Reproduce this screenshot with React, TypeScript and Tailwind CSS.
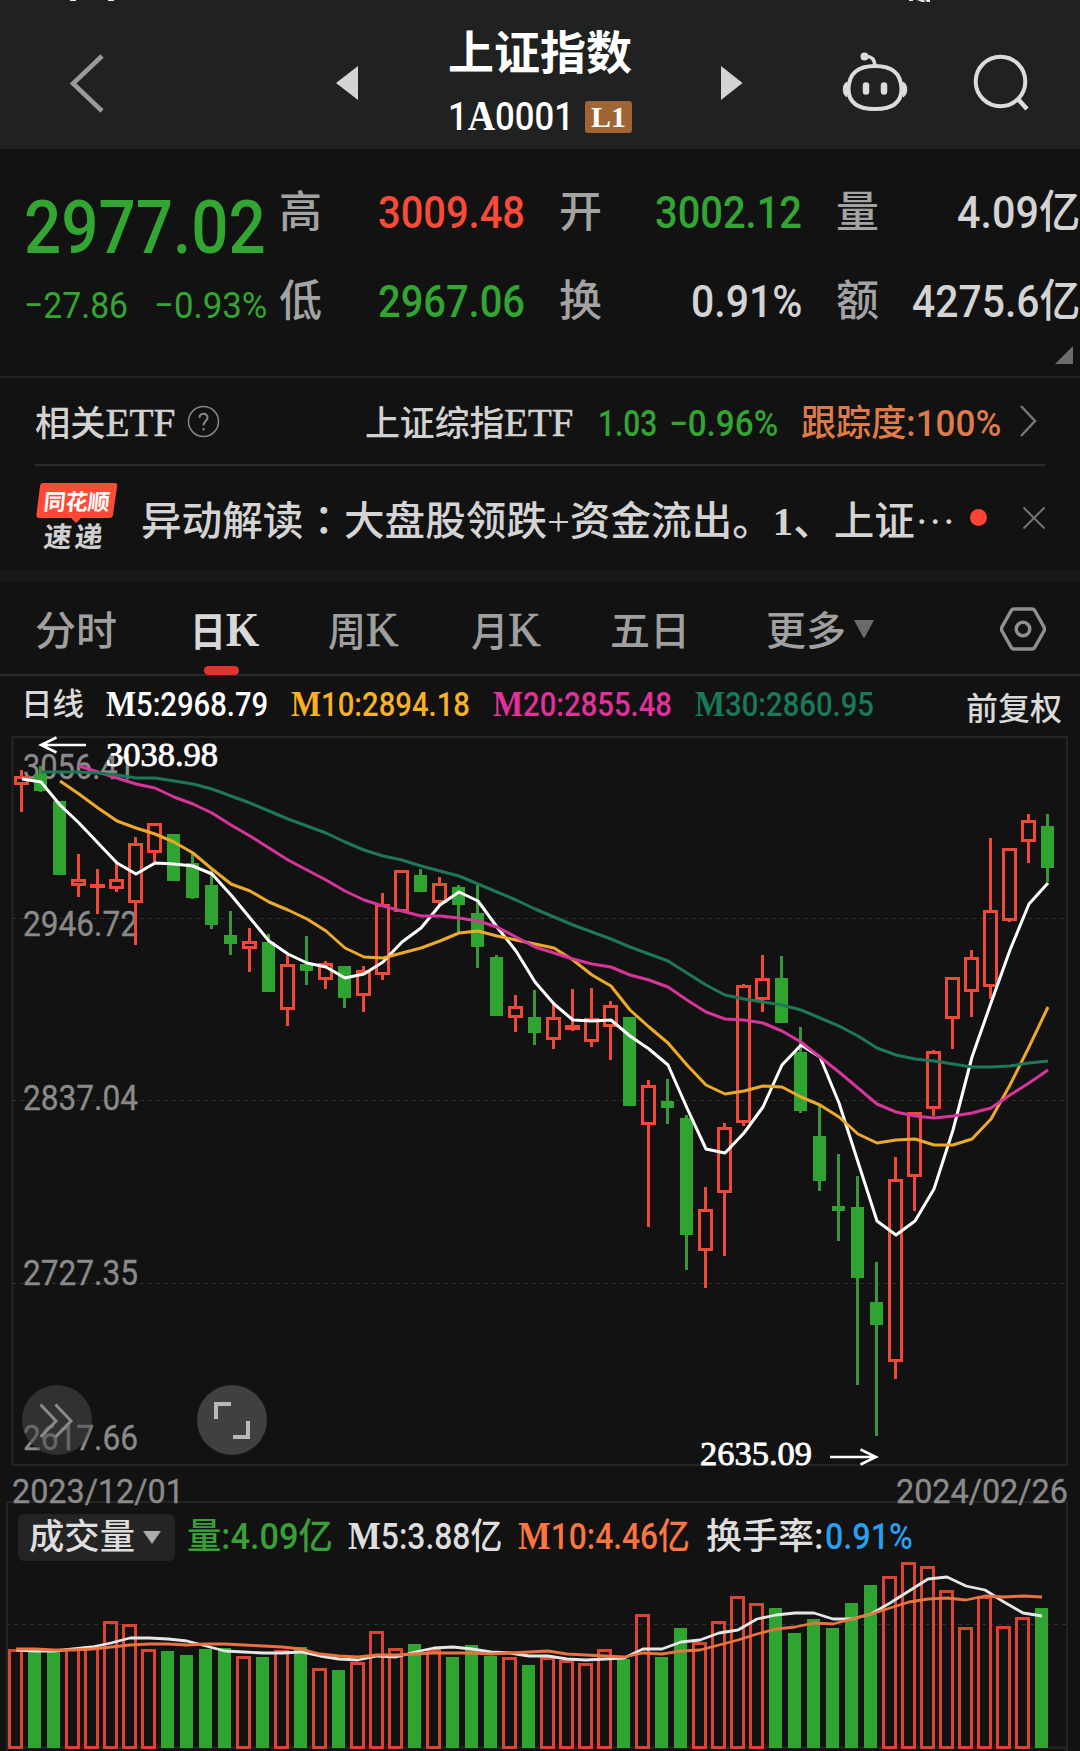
import React, { useLayoutEffect, useRef } from 'react';
import clsx from 'clsx';

const CJK = "font-['Liberation_Serif','Noto_Sans_CJK_SC',serif]";
const NUM = "font-['Roboto','Noto_Sans_CJK_SC',sans-serif]";

// Squeezes or stretches one line of text so that it fills the width of its box
const Fit = ({ className, children }: { className: string; children: React.ReactNode }) => {
  const outer = useRef<HTMLSpanElement>(null);
  const inner = useRef<HTMLSpanElement>(null);

  useLayoutEffect(() => {
    if (!outer.current || !inner.current) return;
    const ratio = outer.current.clientWidth / inner.current.offsetWidth;
    inner.current.style.transform = `scaleX(${ratio})`;
  }, []);

  return (
    <span ref={outer} className={clsx('block shrink-0 whitespace-nowrap leading-none', className)}>
      <span ref={inner} className="inline-block origin-left">
        {children}
      </span>
    </span>
  );
};

const Serif = ({ children }: { children: React.ReactNode }) => (
  <span className="font-['Liberation_Serif',serif] text-[1.09em] font-bold leading-[0]">{children}</span>
);

// [up, high, body top, body bottom, low]
const candles: [number, number, number, number, number][] = [
  [1, 770, 776, 785, 812],
  [0, 766, 774, 791, 792],
  [0, 801, 801, 875, 875],
  [1, 854, 879, 886, 897],
  [1, 869, 884, 888, 914],
  [1, 863, 879, 889, 892],
  [1, 837, 843, 903, 945],
  [1, 823, 823, 853, 862],
  [0, 834, 834, 881, 881],
  [0, 853, 863, 898, 899],
  [0, 870, 885, 925, 929],
  [0, 911, 935, 944, 955],
  [1, 928, 941, 949, 972],
  [0, 934, 942, 992, 992],
  [1, 955, 964, 1010, 1026],
  [0, 936, 964, 971, 985],
  [1, 961, 963, 980, 989],
  [0, 966, 966, 998, 1008],
  [1, 966, 970, 996, 1012],
  [1, 893, 904, 975, 980],
  [1, 870, 870, 912, 912],
  [0, 869, 875, 892, 892],
  [1, 877, 883, 903, 905],
  [0, 885, 887, 905, 932],
  [0, 885, 913, 947, 968],
  [0, 955, 957, 1016, 1016],
  [1, 995, 1006, 1018, 1032],
  [0, 990, 1017, 1033, 1045],
  [1, 1002, 1017, 1040, 1049],
  [1, 989, 1025, 1030, 1031],
  [1, 988, 1018, 1042, 1047],
  [1, 1001, 1005, 1027, 1060],
  [0, 1017, 1017, 1106, 1106],
  [1, 1080, 1085, 1125, 1227],
  [0, 1079, 1101, 1108, 1124],
  [0, 1115, 1118, 1235, 1270],
  [1, 1187, 1209, 1251, 1288],
  [1, 1123, 1127, 1193, 1256],
  [1, 984, 985, 1123, 1126],
  [1, 955, 978, 1000, 1012],
  [0, 956, 978, 1023, 1023],
  [0, 1027, 1052, 1111, 1113],
  [0, 1105, 1136, 1181, 1191],
  [0, 1154, 1206, 1211, 1241],
  [0, 1176, 1207, 1278, 1385],
  [0, 1262, 1302, 1325, 1436],
  [1, 1157, 1179, 1362, 1379],
  [1, 1112, 1112, 1177, 1211],
  [1, 1050, 1051, 1109, 1116],
  [1, 977, 977, 1019, 1049],
  [1, 950, 957, 992, 1017],
  [1, 838, 910, 987, 999],
  [1, 848, 848, 921, 922],
  [1, 814, 820, 842, 863],
  [0, 814, 826, 868, 882],
];

const ma5 = [
  779, 782, 805, 823, 843, 863, 874, 863, 864, 866, 874, 895, 918, 941, 954, 963, 967, 978, 974, 962,
  942, 928, 905, 892, 901, 927, 951, 982, 1004, 1020, 1021, 1020, 1036, 1049, 1065, 1108, 1149, 1153,
  1133, 1107, 1065, 1045, 1057, 1103, 1162, 1221, 1235, 1221, 1189, 1130, 1057, 1003, 950, 904, 883,
];
const ma10 = [
  781, 794, 808, 821, 828, 834, 842, 853, 869, 884, 891, 902, 910, 919, 931, 948, 957, 958, 953, 948,
  941, 933, 931, 936, 940, 944, 948, 960, 975, 986, 1010, 1027, 1043, 1065, 1085, 1094, 1091, 1086,
  1087, 1097, 1105, 1117, 1134, 1143, 1140, 1139, 1145, 1145, 1139, 1119, 1085, 1047, 1007,
];
const ma20 = [
  766, 772, 778, 784, 788, 797, 804, 813, 825, 836, 848, 860, 870, 880, 891, 900, 906, 911, 916, 916,
  918, 921, 927, 937, 947, 953, 959, 964, 967, 975, 980, 987, 1000, 1012, 1019, 1020, 1023, 1031,
  1042, 1057, 1072, 1088, 1104, 1112, 1116, 1118, 1116, 1113, 1108, 1095, 1083, 1070,
];
const ma30 = [
  772, 772, 772, 773, 775, 778, 778, 781, 784, 789, 796, 803, 811, 819, 826, 833, 842, 850, 856, 860,
  866, 871, 876, 884, 892, 900, 909, 917, 925, 932, 939, 947, 954, 961, 973, 985, 995, 999, 1002,
  1005, 1010, 1018, 1026, 1036, 1048, 1055, 1059, 1061, 1064, 1067, 1067, 1066, 1063, 1061,
];

// Tops of the volume bars
const volumes = [
  1649, 1650, 1650, 1648, 1646, 1621, 1624, 1649, 1651, 1655, 1649, 1648, 1656, 1657, 1650, 1647, 1668,
  1670, 1662, 1631, 1648, 1644, 1649, 1657, 1645, 1656, 1657, 1665, 1657, 1660, 1663, 1649, 1659, 1614,
  1657, 1628, 1642, 1621, 1596, 1603, 1608, 1633, 1619, 1628, 1603, 1585, 1576, 1562, 1566, 1590, 1627,
  1596, 1626, 1617, 1608,
];
const volumeUp = new Set([
  0, 3, 4, 5, 6, 7, 12, 14, 16, 18, 19, 20, 22, 26, 28, 29, 30, 31, 33, 36, 37, 38, 39, 46, 47, 48, 49,
  50, 51, 52, 53,
]);
const volMa5 = [
  1650, 1651, 1651, 1649, 1647, 1643, 1638, 1638, 1639, 1641, 1646, 1651, 1652, 1653, 1653, 1652, 1656,
  1659, 1660, 1656, 1657, 1652, 1648, 1647, 1649, 1652, 1653, 1656, 1656, 1659, 1660, 1659, 1658, 1649,
  1649, 1642, 1640, 1633, 1630, 1619, 1615, 1613, 1613, 1619, 1619, 1614, 1603, 1591, 1579, 1577, 1586,
  1590, 1602, 1613, 1616,
];
const volMa10 = [
  1649, 1649, 1650, 1650, 1649, 1647, 1645, 1644, 1644, 1645, 1644, 1644, 1645, 1646, 1647, 1649, 1654,
  1656, 1657, 1655, 1655, 1654, 1653, 1653, 1653, 1654, 1653, 1652, 1651, 1654, 1655, 1656, 1657, 1653,
  1654, 1651, 1650, 1645, 1640, 1634, 1629, 1627, 1623, 1624, 1619, 1614, 1608, 1602, 1599, 1598, 1600,
  1596, 1597, 1596, 1597,
];

const STEP = 19;
const line = (values: number[], x0: number) =>
  values.map((y, i) => `${x0 + i * STEP},${y}`).join(' ');

const Header = () => (
  <header className="relative flex h-[149px] items-center bg-[#1f2221]">
    <svg className="absolute left-0 top-0" width="1080" height="3" fill="#e8e8e8">
      <path d="M70 0h6v1h-6zM108 0h6v1h-6zM909 0h4v1h-4zM917 0l7 0 1 2h-3zM925 0h5v2h-3z" />
    </svg>
    <svg className="ml-[66px] mt-[17px]" width="40" height="62" fill="none" stroke="#9b9b9b" strokeWidth="4.500">
      <path d="M36 4L7 31.5L36 59" />
    </svg>
    <svg className="ml-[229px] mt-[16px]" width="24" height="36" fill="#d4d4d4">
      <path d="M23 1V35L1 18z" />
    </svg>
    <div className="ml-[89px] w-[188px] pt-[18px]">
      <Fit className={clsx('w-[184px] text-[46px] font-bold text-white', CJK)}>上证指数</Fit>
      <div className="mt-[21px] flex items-center">
        <Fit className={clsx('w-[126px] text-[38px] font-medium text-white', NUM)}>
          1<Serif>A</Serif>0001
        </Fit>
        <span className="ml-[11px] flex h-[32px] w-[47px] items-center justify-center rounded-[3px] bg-[#a06534] font-['Liberation_Serif',serif] text-[30px] font-bold leading-none text-white">
          L1
        </span>
      </div>
    </div>
    <svg className="ml-[84px] mt-[16px]" width="24" height="36" fill="#d4d4d4">
      <path d="M1 1V35L22.500 18z" />
    </svg>
    <svg className="ml-[97px] mt-[16px]" width="68" height="64" fill="none" stroke="#dcdcdc" strokeWidth="4">
      <path d="M34 15C50 15 60 21 60.500 38C60.500 52 51 58 34 58S7.500 52 7.500 38C8 21 18 15 34 15z" />
      <path d="M24 5.500C31 5 33.500 8 34 15" strokeWidth="3.500" />
      <circle cx="23.500" cy="5.500" r="4" fill="#dcdcdc" stroke="none" />
      <path d="M6 31C1 33 1 44 6 46zM62 31C67 33 67 44 62 46z" fill="#dcdcdc" strokeWidth="1" />
      <path d="M25 34.500v6M43 34.500v6" strokeWidth="6.500" strokeLinecap="round" />
    </svg>
    <svg className="ml-[63px] mt-[16px]" width="60" height="60" fill="none" stroke="#dcdcdc" strokeWidth="4">
      <circle cx="28.500" cy="28.500" r="24.800" />
      <path d="M45 45L55 56" strokeWidth="4.500" />
    </svg>
  </header>
);

const label = clsx('w-[43px] text-[43px] font-medium text-[#a3a3a3]', CJK);
const figure = clsx('text-[45px] font-medium', NUM);

const Quote = () => (
  <section className="relative flex h-[229px] border-b-2 border-[#232323] text-[#33a532]">
    <div className="ml-[24px] w-[243px] pt-[41px]">
      <Fit className={clsx('w-[242px] text-[75px] font-medium', NUM)}>2977.02</Fit>
      <div className={clsx('mt-[22px] flex justify-between text-[37px]', NUM)}>
        <Fit className="w-[104px]">−27.86</Fit>
        <Fit className="w-[113px]">−0.93%</Fit>
      </div>
    </div>
    <div className="ml-[12px] w-[246px] pt-[40px]">
      <div className="flex h-[46px] items-center justify-between">
        <Fit className={label}>高</Fit>
        <Fit className={clsx('w-[147px] text-[#fb4a38]', figure)}>3009.48</Fit>
      </div>
      <div className="mt-[43px] flex h-[46px] items-center justify-between">
        <Fit className={label}>低</Fit>
        <Fit className={clsx('w-[147px]', figure)}>2967.06</Fit>
      </div>
    </div>
    <div className="ml-[34px] w-[243px] pt-[40px]">
      <div className="flex h-[46px] items-center justify-between">
        <Fit className={label}>开</Fit>
        <Fit className={clsx('w-[147px]', figure)}>3002.12</Fit>
      </div>
      <div className="mt-[43px] flex h-[46px] items-center justify-between text-[#d4d4d4]">
        <Fit className={label}>换</Fit>
        <Fit className={clsx('w-[111px]', figure)}>0.91%</Fit>
      </div>
    </div>
    <div className="ml-[34px] w-[244px] pt-[40px] text-[#d4d4d4]">
      <div className="flex h-[46px] items-center justify-between">
        <Fit className={label}>量</Fit>
        <Fit className={clsx('w-[123px]', figure)}>4.09亿</Fit>
      </div>
      <div className="mt-[43px] flex h-[46px] items-center justify-between">
        <Fit className={label}>额</Fit>
        <Fit className={clsx('w-[168px]', figure)}>4275.6亿</Fit>
      </div>
    </div>
    <svg className="absolute bottom-[12px] right-[7px]" width="18" height="18" fill="#6b6b6b">
      <path d="M18 0V18H0z" />
    </svg>
  </section>
);

const Etf = () => (
  <div className={clsx('mx-[35px] flex h-[88px] items-center border-b-2 border-[#2b2b2b] text-[35px] font-medium text-[#d2d2d2]', CJK)}>
    <Fit className="mt-[3px] w-[140px]">
      相关<span className="text-[39px] [-webkit-text-stroke:0.6px]">ETF</span>
    </Fit>
    <svg className="ml-[12px]" width="33" height="33" fill="none" stroke="#858585" strokeWidth="1.500">
      <circle cx="16.500" cy="16.500" r="15" />
      <path d="M12.500 13C12.500 7.500 20.500 7.500 20.500 12.500C20.500 16 16.500 16 16.500 20.500M16.500 23v2.500" strokeWidth="2" />
    </svg>
    <Fit className="ml-[145px] mt-[3px] w-[208px]">
      上证综指<span className="text-[39px] [-webkit-text-stroke:0.6px]">ETF</span>
    </Fit>
    <Fit className={clsx('ml-[25px] mt-[5px] w-[59px] text-[36px] text-[#33a532]', NUM)}>1.03</Fit>
    <Fit className={clsx('ml-[12px] mt-[5px] w-[109px] text-[36px] text-[#33a532]', NUM)}>−0.96%</Fit>
    <Fit className={clsx('ml-[23px] mt-[6px] w-[200px] text-[36px] text-[#dd7b4a]', NUM)}>跟踪度:100%</Fit>
    <svg className="ml-[17px]" width="20" height="34" fill="none" stroke="#777777" strokeWidth="2.500">
      <path d="M3 2L17 17L3 32" />
    </svg>
  </div>
);

const News = () => (
  <div className="flex h-[104px] items-center pl-[35px]">
    <div className="relative mt-[-2px] flex h-[68px] w-[84px] flex-col items-center">
      <svg className="absolute left-0 top-0" width="84" height="42" fill="#ff4a37">
        <path d="M8 0H80Q83 0 82 4L78 32Q77.500 35 74 35H46L41 40L36 35H4Q1 35 1.500 31L5 3Q5.500 0 8 0z" />
      </svg>
      <span className="relative mt-[5px] -skew-x-6 font-['Noto_Sans_CJK_SC',sans-serif] text-[22px] font-bold leading-[24px] text-white">
        同花顺
      </span>
      <span className="mr-[4px] mt-[10px] -skew-x-6 font-['Noto_Sans_CJK_SC',sans-serif] text-[28px] font-bold leading-[26px] tracking-[3px] text-[#d0d0d0]">
        速递
      </span>
    </div>
    <Fit className={clsx('ml-[22px] mt-[8px] w-[815px] text-[40px] font-medium text-[#d4d4d4]', CJK)}>
      异动解读<span className="font-['Noto_Sans_CJK_TC',sans-serif] leading-[0]">：</span>
      大盘股领跌+资金流出。<span className="font-bold">1</span>、上证···
    </Fit>
    <span className="ml-[14px] mt-[-1px] size-[17px] rounded-full bg-[#ff4433]" />
    <svg className="ml-[35px] mt-[-1px]" width="24" height="24" stroke="#747474" strokeWidth="2">
      <path d="M1.500 1.500L22.500 22.500M22.500 1.500L1.500 22.500" />
    </svg>
  </div>
);

const Tabs = () => (
  <nav className={clsx('flex h-[94px] items-center border-b-2 border-[#2b2b2b] pl-[35px] pb-[2px] text-[40px] font-medium text-[#a0a0a0]', CJK)}>
    <Fit className="mt-[10px] w-[82px]">分时</Fit>
    <div className="relative ml-[73px] mt-[6px] text-[#d8d8d8]">
      <Fit className="w-[69px] font-bold">
        日<span className="text-[48px]">K</span>
      </Fit>
      <span className="absolute left-[14px] top-[60px] h-[9px] w-[35px] rounded-full bg-[#e63131]" />
    </div>
    <Fit className="ml-[69px] mt-[6px] w-[71px]">
      周<span className="text-[48px] [-webkit-text-stroke:0.6px]">K</span>
    </Fit>
    <Fit className="ml-[72px] mt-[6px] w-[70px]">
      月<span className="text-[48px] [-webkit-text-stroke:0.6px]">K</span>
    </Fit>
    <Fit className="ml-[69px] mt-[10px] w-[80px]">五日</Fit>
    <Fit className="ml-[76px] mt-[10px] w-[80px]">更多</Fit>
    <svg className="ml-[7px] mt-[3px]" width="22" height="18" fill="#6a6a6a">
      <path d="M1 0H21L12 17Q11 18 10 17z" />
    </svg>
    <svg className="ml-[125px] mt-[4px]" width="46" height="44" fill="none" stroke="#8f8f8f" strokeWidth="3.500">
      <path d="M14 2H32Q34 2 35 4L44 20Q45 22 44 24L35 40Q34 42 32 42H14Q12 42 11 40L2 24Q1 22 2 20L11 4Q12 2 14 2z" />
      <circle cx="23" cy="22" r="6.800" />
    </svg>
  </nav>
);

const Legend = () => (
  <div className={clsx('flex h-[60px] items-center pb-[4px] text-[33px] font-medium text-white', NUM)}>
    <Fit className="ml-[21px] w-[63px] text-[31px] text-[#dadada]">日线</Fit>
    <Fit className="ml-[22px] w-[162px]">
      <Serif>M</Serif>5:2968.79
    </Fit>
    <Fit className="ml-[23px] w-[179px] text-[#f9b125]">
      <Serif>M</Serif>10:2894.18
    </Fit>
    <Fit className="ml-[23px] w-[179px] text-[#e3319c]">
      <Serif>M</Serif>20:2855.48
    </Fit>
    <Fit className="ml-[23px] w-[179px] text-[#187a58]">
      <Serif>M</Serif>30:2860.95
    </Fit>
    <Fit className="ml-[92px] mt-[10px] w-[96px] text-[32px] text-[#dadada]">前复权</Fit>
  </div>
);

const axis = [
  ['3056.41', 779, 112],
  ['2946.72', 936, 115],
  ['2837.04', 1110, 115],
  ['2727.35', 1285, 115],
  ['2617.66', 1450, 115],
] as const;

const KLine = () => (
  <div className="relative h-[730px]">
    <svg className="block overflow-visible" width="1080" height="730" viewBox="0 736 1080 730">
      <rect x="12.500" y="737" width="1054.500" height="728" fill="none" stroke="#242424" strokeWidth="2" />
      {[918.5, 1100.5, 1283.5].map((y) => (
        <path key={y} d={`M12 ${y}H1066`} stroke="#303030" strokeDasharray="4 4" />
      ))}
      <g className={NUM} fontSize="35" fill="#8a8a8a" stroke="#8a8a8a" strokeWidth="0.4">
        {axis.map(([text, y, w]) => (
          <text key={text} x="23" y={y} textLength={w} lengthAdjust="spacingAndGlyphs">
            {text}
          </text>
        ))}
      </g>
      {candles.map(([up, high, top, bottom, low], i) => {
        const x = 21.5 + i * STEP;
        if (!up) {
          return (
            <g key={i} fill="#30a430">
              <rect x={x - 1.5} y={high} width="3" height={low - high} fill="#389638" />
              <rect x={x - 6.5} y={top} width="13" height={bottom - top} />
            </g>
          );
        }
        return (
          <g key={i} fill="none" stroke="#ef4a39" strokeWidth="3">
            <path d={`M${x} ${high}V${top + 1}M${x} ${bottom - 1}V${low}`} />
            <rect x={x - 6} y={top + 1.5} width="12" height={Math.max(bottom - top - 3, 1)} />
          </g>
        );
      })}
      <g fill="none" strokeWidth="3" strokeLinejoin="round">
        <polyline points={line(ma5, 22)} stroke="#ffffff" />
        <polyline points={line(ma10, 60)} stroke="#eda92c" />
        <polyline points={line(ma20, 79)} stroke="#d63599" />
        <polyline points={line(ma30, 41)} stroke="#1f7759" />
      </g>
      <g fill="none" stroke="#ffffff" strokeWidth="2.500">
        <path d="M86 745H41M56.500 737.500L41 745L56.500 752.500" />
        <path d="M830 1457H876M860.500 1449.500L876 1457L860.500 1464.500" />
      </g>
      <g className="font-['Liberation_Serif',serif]" fontSize="33" fill="#ffffff" stroke="#ffffff" strokeWidth="0.8">
        <text x="106" y="766" textLength="112" lengthAdjust="spacingAndGlyphs">3038.98</text>
        <text x="700" y="1465" textLength="112" lengthAdjust="spacingAndGlyphs">2635.09</text>
      </g>
    </svg>
    <svg className="absolute left-[22px] top-[649px]" width="70" height="70" fill="none" stroke="#8a8a8a" strokeWidth="3">
      <circle cx="35" cy="35" r="35" fill="#4a4a4a" fillOpacity="0.55" stroke="none" />
      <path d="M18.500 19.500L34 36L18.500 52M33.500 19.500L49 36L33.500 52" />
    </svg>
    <svg className="absolute left-[197px] top-[649px]" width="70" height="70" fill="none" stroke="#b8b8b8" strokeWidth="4">
      <circle cx="35" cy="35" r="35" fill="#404040" stroke="none" />
      <path d="M19 34V19H34M51 36V52H36" />
    </svg>
  </div>
);

const Dates = () => (
  <div className={clsx('relative flex h-[35px] items-center justify-between pl-[12px] pr-[12px] pt-[14px] text-[34px] text-[#8a8a8a]', NUM)}>
    <Fit className="w-[172px] [-webkit-text-stroke:0.4px]">2023/12/01</Fit>
    <Fit className="w-[172px] [-webkit-text-stroke:0.4px]">2024/02/26</Fit>
  </div>
);

const Volume = () => (
  <section className="ml-[6px] h-[250px] w-[1062px] border-x-2 border-t-2 border-[#242424]">
    <div className={clsx('flex h-[58px] items-center pt-[10px] pl-[10px] text-[36px] font-medium text-[#dedede]', NUM)}>
      <div className="flex h-[47px] w-[157px] items-center rounded-[6px] bg-[#242424] pl-[11px]">
        <Fit className="w-[106px] text-[35px]">成交量</Fit>
        <svg className="ml-[8px]" width="18" height="13" fill="#ababab">
          <path d="M0 0H18L9 13z" />
        </svg>
      </div>
      <Fit className="ml-[12px] w-[146px] text-[#38a037]">量:4.09亿</Fit>
      <Fit className="ml-[15px] w-[154px]">
        <Serif>M</Serif>5:3.88亿
      </Fit>
      <Fit className="ml-[16px] w-[172px] text-[#fb7540]">
        <Serif>M</Serif>10:4.46亿
      </Fit>
      <Fit className="ml-[16px] w-[118px]">换手率:</Fit>
      <Fit className="ml-px w-[88px] text-[#2a9ff0]">0.91%</Fit>
    </div>
    <svg className="ml-[-2px] block" width="1062" height="190" viewBox="6 1561 1062 190">
      <path d="M6 1624.500H1068" stroke="#303030" strokeDasharray="4 4" />
      <path d="M6 1747.500H1068" stroke="#242424" strokeWidth="2" />
      {volumes.map((top, i) => {
        const x = 15.5 + i * STEP;
        return volumeUp.has(i) ? (
          <rect key={i} x={x - 6} y={top + 1.5} width="12" height={1746 - top} fill="none" stroke="#d94434" strokeWidth="3" />
        ) : (
          <rect key={i} x={x - 6.5} y={top} width="13" height={1748 - top} fill="#30a430" />
        );
      })}
      <g fill="none" strokeWidth="2.800" strokeLinejoin="round">
        <polyline points={line(volMa5, 16)} stroke="#e6e6e6" />
        <polyline points={line(volMa10, 16)} stroke="#ea7340" />
      </g>
    </svg>
  </section>
);

const App = () => {
  return (
    <div className="h-[1751px] w-[1080px] overflow-hidden bg-[#121212]">
      <Header />
      <Quote />
      <Etf />
      <News />
      <div className="h-[12px] bg-[#171717]" />
      <Tabs />
      <Legend />
      <KLine />
      <Dates />
      <Volume />
    </div>
  );
};

export default App;
